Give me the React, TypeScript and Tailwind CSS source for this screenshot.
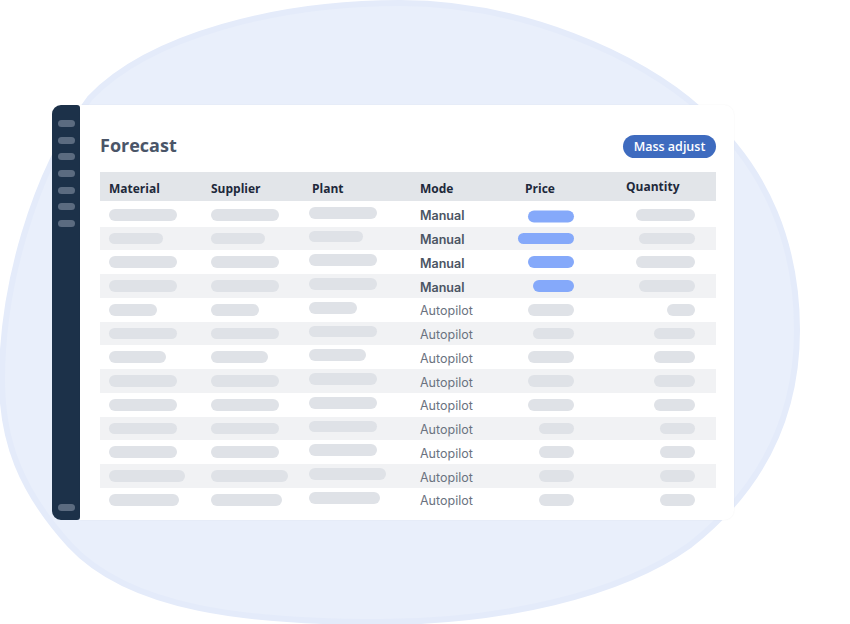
const rows = [
  { m: 68, s: 68, p: 68, mode: 'Manual', price: 46, blue: true, q: 59 },
  { m: 54, s: 54, p: 54, mode: 'Manual', price: 56, blue: true, q: 56 },
  { m: 68, s: 68, p: 68, mode: 'Manual', price: 46, blue: true, q: 59 },
  { m: 68, s: 68, p: 68, mode: 'Manual', price: 41, blue: true, q: 56 },
  { m: 48, s: 48, p: 48, mode: 'Autopilot', price: 46, blue: false, q: 28 },
  { m: 68, s: 68, p: 68, mode: 'Autopilot', price: 41, blue: false, q: 41 },
  { m: 57, s: 57, p: 57, mode: 'Autopilot', price: 46, blue: false, q: 41 },
  { m: 68, s: 68, p: 68, mode: 'Autopilot', price: 46, blue: false, q: 41 },
  { m: 68, s: 68, p: 68, mode: 'Autopilot', price: 46, blue: false, q: 41 },
  { m: 68, s: 68, p: 68, mode: 'Autopilot', price: 35, blue: false, q: 35 },
  { m: 68, s: 68, p: 68, mode: 'Autopilot', price: 35, blue: false, q: 35 },
  { m: 76, s: 77, p: 77, mode: 'Autopilot', price: 35, blue: false, q: 35 },
  { m: 70, s: 71, p: 71, mode: 'Autopilot', price: 35, blue: false, q: 35 },
]

const headers = ['Material', 'Supplier', 'Plant', 'Mode', 'Price', 'Quantity']

function Pill({ w, blue = false, className = '' }: { w: number; blue?: boolean; className?: string }) {
  return (
    <div
      className={`h-[11.7px] rounded-full ${blue ? 'bg-[#85a9fa]' : 'bg-[#dfe2e7]'} ${className}`}
      style={{ width: w }}
    />
  )
}

// background blob
function Blob() {
  return (
    <svg className="absolute inset-0" width="850" height="624" viewBox="0 0 850 624">
      <path
        d="M 400 3 C 520 3 640 55 700 110 C 770 170 797 250 797 330 C 797 420 760 490 690 545 C 620 595 500 622 380 622 C 250 622 130 610 70 545 C 20 490 2 440 2 380 C 2 290 32 175 90 98 C 150 35 280 3 400 3 Z"
        fill="#e9effb"
        stroke="#e4ebfa"
        strokeWidth="6"
      />
    </svg>
  )
}

function Sidebar() {
  return (
    <div className="w-[28px] bg-[#1c3149] rounded-l-[9px] rounded-r-[3px] flex flex-col justify-between items-center pt-[15px] pb-[9px]">
      <div className="flex flex-col gap-[9.7px]">
        {[0, 1, 2, 3, 4, 5, 6].map((i) => (
          <div key={i} className="w-[17px] h-[7px] rounded-full bg-[#5b6b80]" />
        ))}
      </div>
      <div className="w-[17px] h-[7px] rounded-full bg-[#5b6b80]" />
    </div>
  )
}

export default function App() {
  return (
    <div className="relative w-[850px] h-[624px] bg-white overflow-hidden">
      <Blob />
      <div className="relative pt-[105px] pl-[52px] flex">
        <Sidebar />
        <div className="w-[654px] h-[415px] bg-white rounded-r-[10px] shadow-[0_0_2px_rgba(0,0,0,0.05)] pl-[20px] pr-[18px] pt-[30px]">
          <div className="flex items-center justify-between h-[23px]">
            <h2 className="text-[18px] font-bold text-[#4a5568] font-['Open_Sans',sans-serif] -translate-y-[1px]">Forecast</h2>
            <button className="h-[23px] w-[93px] rounded-full bg-[#3e6bbf] text-white text-[12.5px] font-semibold font-['Open_Sans',sans-serif] pt-[1px]">
              Mass adjust
            </button>
          </div>
          <div className="mt-[14px]">
            <div className="grid grid-cols-[102px_101px_108px_105px_101px_99px] h-[29px] items-center bg-[#e2e5e9] font-['Open_Sans',sans-serif] font-bold text-[12px] text-[#1e293b]">
              {headers.map((h) => (
                <div key={h} className={`pl-[9px] ${h === 'Quantity' ? 'translate-y-[0px]' : 'translate-y-[2px]'}`}>
                  {h}
                </div>
              ))}
            </div>
            {rows.map((r, i) => (
              <div
                key={i}
                className={`grid grid-cols-[102px_101px_108px_105px_101px_99px] items-center ${i === 0 ? 'h-[25.7px] pt-[2px]' : 'h-[23.75px]'} ${i % 2 === 1 ? 'bg-[#f1f2f4]' : ''}`}
              >
                <div className="pl-[9px]">
                  <Pill w={r.m} />
                </div>
                <div className="pl-[9px]">
                  <Pill w={r.s} />
                </div>
                <div className="pl-[6px]">
                  <Pill w={r.p} className="-translate-y-[2px]" />
                </div>
                <div
                  className={`pl-[9px] text-[12.5px] font-['Inter',sans-serif] translate-y-[2px] ${r.mode === 'Manual' ? 'font-semibold text-[#4b5563]' : 'font-normal text-[#6b7280]'}`}
                >
                  {r.mode}
                </div>
                <div className="flex justify-end pr-[43px]">
                  <Pill w={r.price} blue={r.blue} className={i === 0 ? 'translate-y-[1.5px]' : ''} />
                </div>
                <div className="flex justify-end pr-[21px]">
                  <Pill w={r.q} />
                </div>
              </div>
            ))}
          </div>
        </div>
      </div>
    </div>
  )
}
